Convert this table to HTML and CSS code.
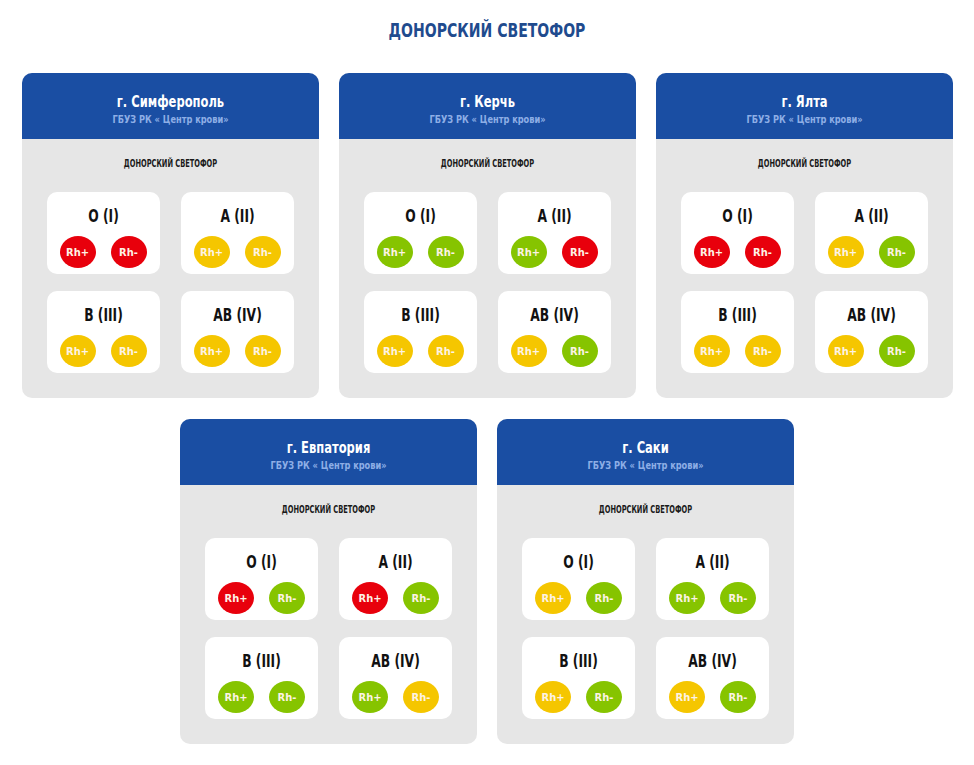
FILE: index.html
```html
<!DOCTYPE html>
<html lang="ru">
<head>
<meta charset="utf-8">
<title>Донорский светофор</title>
<link rel="stylesheet" href="styles.css">
</head>
<body>
<div class="page">
  <h1 class="page-title">ДОНОРСКИЙ СВЕТОФОР</h1>
  <div class="cards">
    <div class="card">
      <div class="card-head"><div class="city">г. Симферополь</div><div class="org">ГБУЗ РК « Центр крови»</div></div>
      <div class="card-body">
        <div class="sub">ДОНОРСКИЙ СВЕТОФОР</div>
        <div class="groups">
          <div class="group"><div class="g-name">O (I)</div><div class="dots"><span class="dot red">Rh+</span><span class="dot red">Rh-</span></div></div>
          <div class="group"><div class="g-name">A (II)</div><div class="dots"><span class="dot yellow">Rh+</span><span class="dot yellow">Rh-</span></div></div>
          <div class="group"><div class="g-name">B (III)</div><div class="dots"><span class="dot yellow">Rh+</span><span class="dot yellow">Rh-</span></div></div>
          <div class="group"><div class="g-name">AB (IV)</div><div class="dots"><span class="dot yellow">Rh+</span><span class="dot yellow">Rh-</span></div></div>
        </div>
      </div>
    </div>
    <div class="card">
      <div class="card-head"><div class="city">г. Керчь</div><div class="org">ГБУЗ РК « Центр крови»</div></div>
      <div class="card-body">
        <div class="sub">ДОНОРСКИЙ СВЕТОФОР</div>
        <div class="groups">
          <div class="group"><div class="g-name">O (I)</div><div class="dots"><span class="dot green">Rh+</span><span class="dot green">Rh-</span></div></div>
          <div class="group"><div class="g-name">A (II)</div><div class="dots"><span class="dot green">Rh+</span><span class="dot red">Rh-</span></div></div>
          <div class="group"><div class="g-name">B (III)</div><div class="dots"><span class="dot yellow">Rh+</span><span class="dot yellow">Rh-</span></div></div>
          <div class="group"><div class="g-name">AB (IV)</div><div class="dots"><span class="dot yellow">Rh+</span><span class="dot green">Rh-</span></div></div>
        </div>
      </div>
    </div>
    <div class="card">
      <div class="card-head"><div class="city">г. Ялта</div><div class="org">ГБУЗ РК « Центр крови»</div></div>
      <div class="card-body">
        <div class="sub">ДОНОРСКИЙ СВЕТОФОР</div>
        <div class="groups">
          <div class="group"><div class="g-name">O (I)</div><div class="dots"><span class="dot red">Rh+</span><span class="dot red">Rh-</span></div></div>
          <div class="group"><div class="g-name">A (II)</div><div class="dots"><span class="dot yellow">Rh+</span><span class="dot green">Rh-</span></div></div>
          <div class="group"><div class="g-name">B (III)</div><div class="dots"><span class="dot yellow">Rh+</span><span class="dot yellow">Rh-</span></div></div>
          <div class="group"><div class="g-name">AB (IV)</div><div class="dots"><span class="dot yellow">Rh+</span><span class="dot green">Rh-</span></div></div>
        </div>
      </div>
    </div>
    <div class="card">
      <div class="card-head"><div class="city">г. Евпатория</div><div class="org">ГБУЗ РК « Центр крови»</div></div>
      <div class="card-body">
        <div class="sub">ДОНОРСКИЙ СВЕТОФОР</div>
        <div class="groups">
          <div class="group"><div class="g-name">O (I)</div><div class="dots"><span class="dot red">Rh+</span><span class="dot green">Rh-</span></div></div>
          <div class="group"><div class="g-name">A (II)</div><div class="dots"><span class="dot red">Rh+</span><span class="dot green">Rh-</span></div></div>
          <div class="group"><div class="g-name">B (III)</div><div class="dots"><span class="dot green">Rh+</span><span class="dot green">Rh-</span></div></div>
          <div class="group"><div class="g-name">AB (IV)</div><div class="dots"><span class="dot green">Rh+</span><span class="dot yellow">Rh-</span></div></div>
        </div>
      </div>
    </div>
    <div class="card">
      <div class="card-head"><div class="city">г. Саки</div><div class="org">ГБУЗ РК « Центр крови»</div></div>
      <div class="card-body">
        <div class="sub">ДОНОРСКИЙ СВЕТОФОР</div>
        <div class="groups">
          <div class="group"><div class="g-name">O (I)</div><div class="dots"><span class="dot yellow">Rh+</span><span class="dot green">Rh-</span></div></div>
          <div class="group"><div class="g-name">A (II)</div><div class="dots"><span class="dot green">Rh+</span><span class="dot green">Rh-</span></div></div>
          <div class="group"><div class="g-name">B (III)</div><div class="dots"><span class="dot yellow">Rh+</span><span class="dot green">Rh-</span></div></div>
          <div class="group"><div class="g-name">AB (IV)</div><div class="dots"><span class="dot yellow">Rh+</span><span class="dot green">Rh-</span></div></div>
        </div>
      </div>
    </div>
  </div>
</div>
</body>
</html>
```

FILE: styles.css
```css
* { box-sizing: border-box; }
html, body { margin: 0; padding: 0; background: #ffffff; }
body {
  font-family: "DejaVu Sans Condensed", "DejaVu Sans", sans-serif;
  font-stretch: condensed;
  color: #111;
}
.page {
  width: 974px;
  padding-top: 19px;
}
.page-title {
  margin: 0;
  height: 22px;
  line-height: 22px;
  text-align: center;
  font-size: 20px;
  font-weight: 700;
  color: #1f4b8e;
  transform: scaleX(0.78);
}
.cards {
  width: 931px;
  margin: 32px auto 0;
  display: flex;
  flex-wrap: wrap;
  justify-content: center;
  column-gap: 20px;
  row-gap: 21px;
}
.card {
  width: 297px;
  height: 325px;
  border-radius: 10px;
  overflow: hidden;
  background: #e6e6e6;
}
.card-head {
  height: 66px;
  background: #1a4ea3;
  text-align: center;
  padding-top: 19px;
}
.city {
  color: #fff;
  font-size: 16px;
  font-weight: 700;
  line-height: 20px;
  transform: scaleX(0.8);
}
.org {
  margin-top: 1px;
  color: #8eaee6;
  font-size: 11px;
  font-weight: 700;
  line-height: 14px;
  transform: scaleX(0.83);
}
.card-body {
  padding: 19px 25px 0;
}
.sub {
  text-align: center;
  font-size: 10px;
  font-weight: 700;
  line-height: 11px;
  color: #1a1a1a;
  transform: scaleX(0.74);
}
.groups {
  margin-top: 23px;
  display: grid;
  grid-template-columns: 113px 113px;
  column-gap: 21px;
  row-gap: 17px;
}
.group {
  height: 82px;
  background: #fff;
  border-radius: 10px;
  padding-top: 13px;
  text-align: center;
}
.g-name {
  font-size: 18px;
  font-weight: 700;
  line-height: 22px;
  color: #111;
  transform: scaleX(0.76);
}
.dots {
  margin-top: 9px;
  display: flex;
  justify-content: center;
  gap: 15px;
}
.dot {
  width: 36px;
  height: 32px;
  border-radius: 50%;
  display: flex;
  align-items: center;
  justify-content: center;
  font-size: 11px;
  font-weight: 700;
  color: #fdf3e6;
}
.red { background: #e8000c; }
.yellow { background: #f5c600; }
.green { background: #86c400; }
```
